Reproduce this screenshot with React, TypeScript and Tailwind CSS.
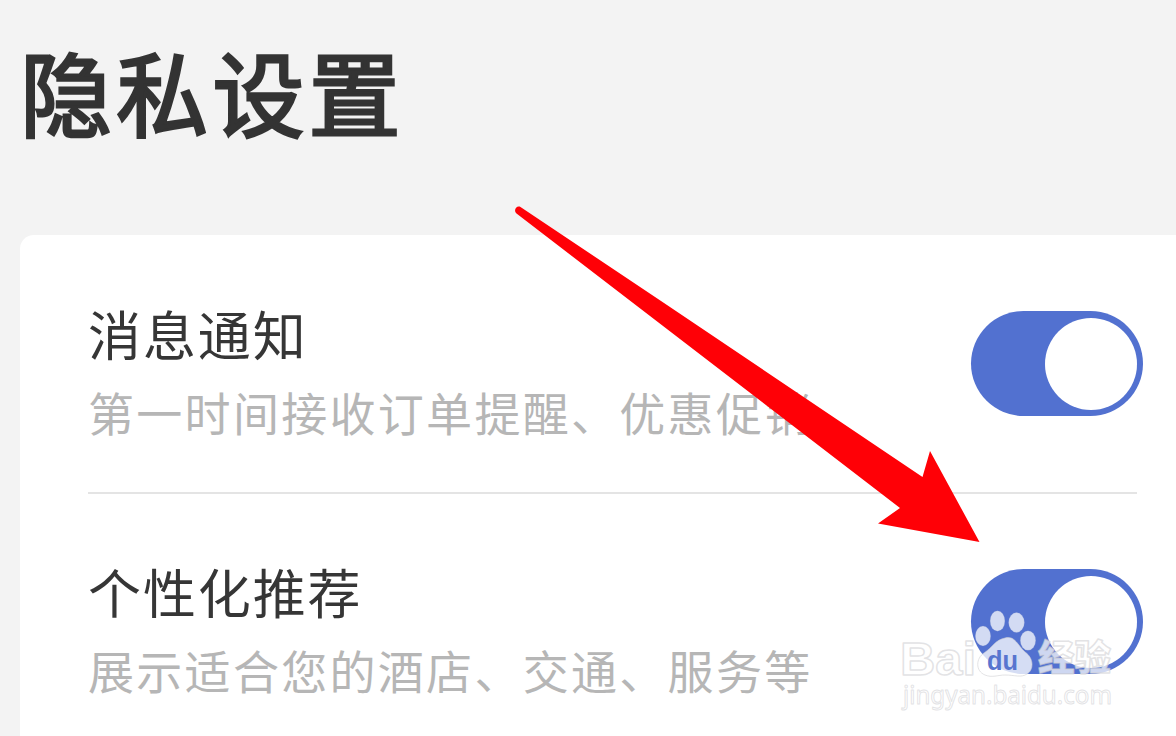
import React, { useState } from "react";

function Toggle({ label }: { label: string }) {
  const [on, setOn] = useState(true);
  return (
    <button
      type="button"
      role="switch"
      aria-checked={on}
      aria-label={label}
      onClick={() => setOn(!on)}
      className={
        on
          ? "flex h-[105px] w-[172px] shrink-0 items-center justify-end rounded-full bg-[#5271d0] px-[6px]"
          : "flex h-[105px] w-[172px] shrink-0 items-center justify-start rounded-full bg-[#cccccc] px-[6px]"
      }
    >
      <span className="size-[92px] rounded-full bg-white" />
    </button>
  );
}

function SettingRow({ title, detail }: { title: string; detail: string }) {
  return (
    <div className="flex items-start justify-between pr-[33px]">
      <div className="flex flex-col whitespace-nowrap">
        <span className="h-[75px] text-[53px] leading-[70px] tracking-[1.9px] text-[#363636]">{title}</span>
        <span className="h-[81px] text-[46px] leading-[77px] tracking-[2.3px] text-[#b6b6b6]">{detail}</span>
      </div>
      <div className="pt-[13px]">
        <Toggle label={title} />
      </div>
    </div>
  );
}

function Arrow() {
  return (
    <svg className="pointer-events-none absolute left-[500px] top-[190px]" width="500" height="360" viewBox="0 0 500 360" fill="#ff0006">
      <path d="M20.500 17 L167 115 L422.500 287 L430 261 L479.500 352 L378 333.500 L400 318 L16.500 23.500 C13 20.500 16.500 15 20.500 17 Z" />
    </svg>
  );
}

function Watermark() {
  return (
    <svg className="pointer-events-none absolute left-[896px] top-[604px]" width="226" height="110" viewBox="0 0 226 110">
      <g stroke="#d0d0d4" strokeOpacity="0.6" strokeWidth="1.500" fill="#ffffff" fillOpacity="0.74" strokeLinejoin="round">
        <text x="4" y="71" fontFamily="Liberation Sans, sans-serif" fontWeight="700" fontSize="47" textLength="76" lengthAdjust="spacingAndGlyphs">Bai</text>
        <text x="142" y="67" fontFamily="Noto Sans CJK SC, sans-serif" fontWeight="900" fontSize="36" textLength="73" lengthAdjust="spacingAndGlyphs">经验</text>
        <text x="7" y="99.500" fontFamily="Noto Sans, sans-serif" strokeWidth="1" fontSize="25" textLength="209" lengthAdjust="spacingAndGlyphs">jingyan.baidu.com</text>
      </g>
      <g fill="#d3dbf3" stroke="#8090ba" strokeOpacity="0.3" strokeWidth="0.600">
        <ellipse cx="87" cy="32" rx="7.700" ry="10" />
        <ellipse cx="101.500" cy="17" rx="7.400" ry="10.200" />
        <ellipse cx="120.500" cy="18.500" rx="7.900" ry="10" />
        <ellipse cx="132" cy="36.500" rx="7.700" ry="9.800" />
      </g>
      <path
        d="M109 34 C119 31 122 42 129 48 C138 54 138 66 131 70 C125 74 119 71 109 71 C102 71 96 74 89 71 C79 67 80 54 88 49 C97 43 99 36 109 34 Z"
        fill="#ffffff"
        fillOpacity="0.76"
        stroke="#d0d0d4"
        strokeOpacity="0.6"
      />
      <text x="91" y="66" fontFamily="Liberation Sans, sans-serif" fontWeight="700" fontSize="28" fill="#5875cf" textLength="31" lengthAdjust="spacingAndGlyphs">du</text>
    </svg>
  );
}

export default function App() {
  return (
    <div className="relative flex h-[736px] w-[1176px] flex-col overflow-hidden bg-[#f3f3f3] font-['Noto_Sans_CJK_SC',sans-serif]">
      <header className="h-[235px] shrink-0 pl-[20px] pt-[25px]">
        <h1 className="text-[92px] font-normal leading-[130px] tracking-[4.2px] text-[#333333] [-webkit-text-stroke:2.8px_#333333]">隐私设置</h1>
      </header>
      <main className="ml-[20px] flex grow flex-col rounded-tl-[14px] bg-white pl-[68px] pt-[63px]">
        <SettingRow title="消息通知" detail="第一时间接收订单提醒、优惠促销" />
        <div className="mb-[62px] mr-[39px] mt-[38px] h-[2px] shrink-0 bg-[#e4e4e4]" />
        <SettingRow title="个性化推荐" detail="展示适合您的酒店、交通、服务等" />
      </main>
      <Arrow />
      <Watermark />
    </div>
  );
}
